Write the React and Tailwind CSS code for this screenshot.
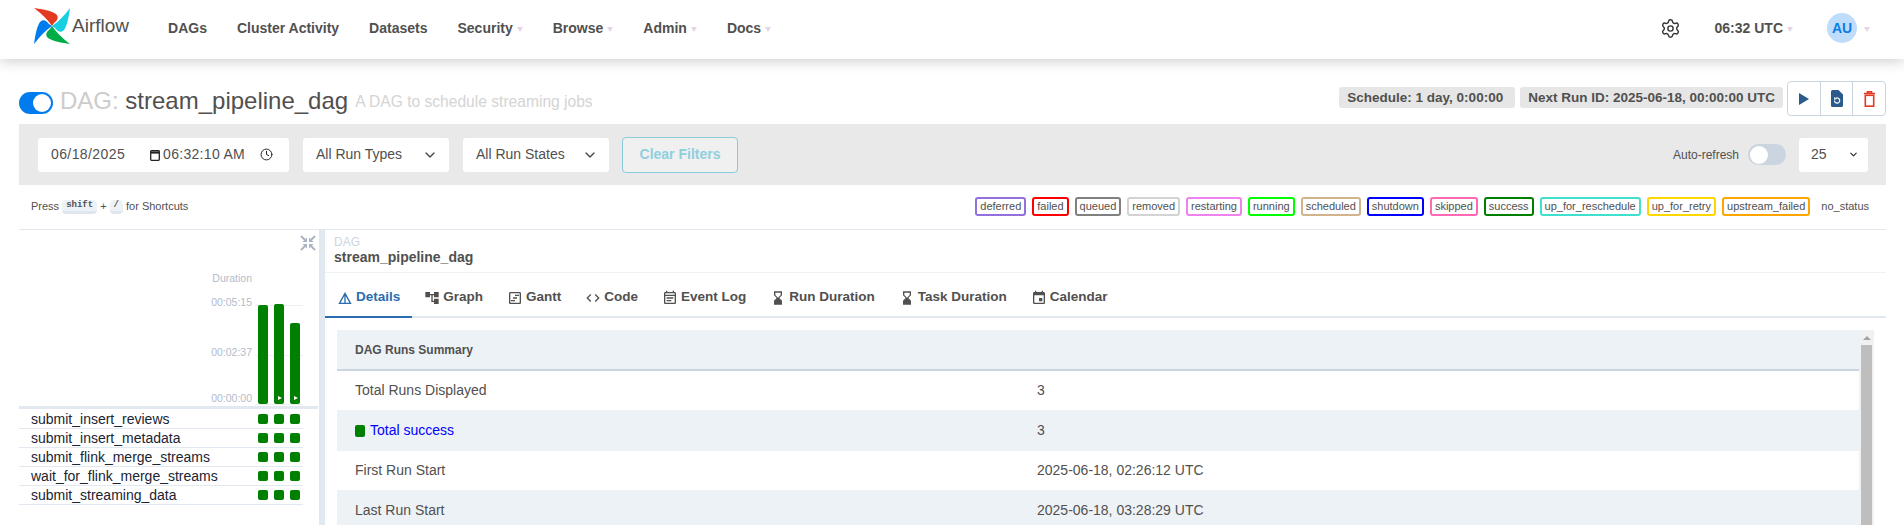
import React from "react";
import { ChevronDown, Settings, Clock } from "lucide-react";
import { MdDetails, MdAccountTree, MdOutlineViewTimeline, MdCode, MdOutlineEventNote, MdHourglassBottom, MdEvent } from "react-icons/md";

const Caret = ({ className }) => (
  <span className={"mt-[2px] inline-block h-0 w-0 border-x-[3.5px] border-t-[5px] border-x-transparent border-t-[#e4d5e6] " + (className || "ml-[4px]")} />
);

const blade = "M0 0C8 1 18 3 22 6C25 9 24 12 20 15L18 18C14 12 8 6 0 0Z";

const Logo = () => (
  <svg viewBox="0 0 36 36" className="h-[36px] w-[36px] shrink-0">
    <path d={blade} fill="#e43921" />
    <path d={blade} fill="#17cfe0" transform="rotate(90 18 18)" />
    <path d={blade} fill="#00ad46" transform="rotate(180 18 18)" />
    <path d={blade} fill="#017cee" transform="rotate(270 18 18)" />
  </svg>
);

const NavItem = ({ label, caret, className }) => (
  <span className={"flex items-center text-[14px] font-bold text-[#51504f] " + (className || "")}>
    {label}
    {caret && <Caret />}
  </span>
);

const Field = ({ children, className }) => (
  <div className={"flex h-[34px] items-center rounded-[3px] bg-white text-[14px] text-[#51504f] " + className}>{children}</div>
);

const legend = [
  ["deferred", "border-[#9370db]"],
  ["failed", "border-[#ff0000]"],
  ["queued", "border-[#808080]"],
  ["removed", "border-[#d3d3d3]"],
  ["restarting", "border-[#ee82ee]"],
  ["running", "border-[#00ff00]"],
  ["scheduled", "border-[#d2b48c]"],
  ["shutdown", "border-[#0000ff]"],
  ["skipped", "border-[#ff69b4]"],
  ["success", "border-[#008000]"],
  ["up_for_reschedule", "border-[#40e0d0]"],
  ["up_for_retry", "border-[#ffd700]"],
  ["upstream_failed", "border-[#ffa500]"],
];

const tasks = [
  "submit_insert_reviews",
  "submit_insert_metadata",
  "submit_flink_merge_streams",
  "wait_for_flink_merge_streams",
  "submit_streaming_data",
];

const Kbd = ({ children }) => (
  <kbd className="mx-[3px] rounded-[4px] border-b-[3px] border-[#dfe6ef] bg-[#edf2f7] px-[4px] font-['Liberation_Mono',monospace] text-[9px] font-bold leading-[11px] text-[#51504f]">
    {children}
  </kbd>
);

const tabs = [
  { label: "Graph", Icon: MdAccountTree },
  { label: "Gantt", Icon: MdOutlineViewTimeline },
  { label: "Code", Icon: MdCode },
  { label: "Event Log", Icon: MdOutlineEventNote },
  { label: "Run Duration", Icon: MdHourglassBottom },
  { label: "Task Duration", Icon: MdHourglassBottom },
  { label: "Calendar", Icon: MdEvent },
];

const rows = [
  ["Total Runs Displayed", "3", "h-[39px] bg-white"],
  ["Total success", "3", "h-[41px] bg-[#edf2f7]"],
  ["First Run Start", "2025-06-18, 02:26:12 UTC", "h-[39px] bg-white"],
  ["Last Run Start", "2025-06-18, 03:28:29 UTC", "h-[41px] bg-[#edf2f7]"],
];

const CollapseIcon = () => (
  <svg viewBox="0 0 16 16" className="absolute right-[3px] top-[5px] h-[16px] w-[16px]" fill="#a9b4c2" stroke="#a9b4c2">
    {[0, 90, 180, 270].map((r) => (
      <g key={r} transform={`rotate(${r} 8 8)`}>
        <path d="M1 1L5 5" strokeWidth="2" fill="none" />
        <path d="M7 2.500V7H2.500Z" strokeWidth="0" />
      </g>
    ))}
  </svg>
);

const Chart = () => (
  <svg viewBox="0 0 299 176" className="block h-[176px] w-[299px] font-['Liberation_Sans',Arial,sans-serif]">
    <text x="233" y="52" textAnchor="end" fontSize="10.500" fill="#b2bccb">Duration</text>
    <text x="233" y="76" textAnchor="end" fontSize="10.500" fill="#b2bccb">00:05:15</text>
    <text x="233" y="126" textAnchor="end" fontSize="10.500" fill="#b2bccb">00:02:37</text>
    <text x="233" y="172" textAnchor="end" fontSize="10.500" fill="#b2bccb">00:00:00</text>
    <path d="M236 75.500H284M236 125.500H284M236 174.500H284" stroke="#edf0f4" />
    <rect x="239" y="75" width="10" height="99" rx="2" fill="#008000" />
    <rect x="255" y="74" width="10" height="100" rx="2" fill="#008000" />
    <rect x="271" y="93" width="10" height="81" rx="2" fill="#008000" />
    <path d="M259 166l4 2-4 2zM275 166l4 2-4 2z" fill="#fff" />
  </svg>
);

export default function App() {
  return (
    <div className="h-[525px] w-[1904px] overflow-hidden bg-white font-['Liberation_Sans',Arial,sans-serif] text-[#51504f]">
      <header className="relative z-10 flex h-[59px] items-center bg-white pl-[34px] pr-[34px] shadow-[0_3px_12px_rgba(0,0,0,0.18)]">
        <div className="mb-[8px] flex items-center">
          <Logo />
          <span className="ml-[2px] text-[19px] leading-none text-[#51504f]">Airflow</span>
        </div>
        <nav className="mb-[3px] ml-[39px] flex items-center gap-[30px]">
          <NavItem label="DAGs" />
          <NavItem label="Cluster Activity" />
          <NavItem label="Datasets" />
          <NavItem label="Security" caret />
          <NavItem label="Browse" caret />
          <NavItem label="Admin" caret />
          <NavItem label="Docs" caret />
        </nav>
        <div className="mb-[3px] ml-auto flex items-center">
          <Settings size={21} strokeWidth={1.600} color="#333" />
          <NavItem label="06:32 UTC" caret className="ml-[34px]" />
          <div className="ml-[34px] flex h-[30px] w-[30px] items-center justify-center rounded-full bg-[#bfdcfb] text-[14px] font-bold text-[#0c7ce6]">AU</div>
          <Caret className="ml-[7px]" />
        </div>
      </header>

      <main className="flex flex-col pl-[19px] pr-[18px]">
        <div className="flex h-[65px] items-end pb-[9px]">
          <div className="mb-[1px] flex h-[22px] w-[34px] shrink-0 items-center justify-end rounded-full bg-[#017cee] pr-[2px]">
            <span className="h-[18px] w-[18px] rounded-full bg-white" />
          </div>
          <h2 className="mb-[1px] ml-[7px] text-[24px] leading-[27px] text-[#51504f]">
            <span className="text-[#cccccc]">DAG: </span>stream_pipeline_dag
          </h2>
          <span className="mb-[1px] ml-[7px] text-[15.600px] leading-[24px] text-[#d4d4d4]">A DAG to schedule streaming jobs</span>
          <div className="mb-[-1px] ml-auto flex items-center">
            <span className="mb-[2px] rounded-[3px] bg-[#e6e6e6] pl-[8px] pr-[12px] text-[13.500px] font-bold leading-[21px] text-[#51504f]">Schedule: 1 day, 0:00:00</span>
            <span className="mb-[2px] ml-[5px] rounded-[3px] bg-[#e6e6e6] px-[8px] text-[13.500px] font-bold leading-[21px] text-[#51504f]">Next Run ID: 2025-06-18, 00:00:00 UTC</span>
            <div className="ml-[4px] flex h-[35px] w-[99px] rounded-[4px] border border-[#cbd5e0] bg-white">
              <div className="flex flex-1 items-center justify-center border-r border-[#cbd5e0]">
                <svg viewBox="0 0 10 12" className="h-[12px] w-[10px]"><path d="M0 0L10 6L0 12Z" fill="#2a5b8c" /></svg>
              </div>
              <div className="flex flex-1 items-center justify-center border-r border-[#cbd5e0]">
                <svg viewBox="0 0 12 17" className="h-[17px] w-[12px]">
                  <path d="M1.500 0H7.500L12 4.500V15.500A1.500 1.500 0 0 1 10.500 17H1.500A1.500 1.500 0 0 1 0 15.500V1.500A1.500 1.500 0 0 1 1.500 0Z" fill="#2a5b8c" />
                  <path d="M3.500 10.500a2.600 2.600 0 1 0 1-2" fill="none" stroke="#fff" strokeWidth="1.200" />
                  <path d="M3 7v2.500H5.500z" fill="#fff" />
                </svg>
              </div>
              <div className="flex flex-1 items-center justify-center">
                <svg viewBox="0 0 11 16" className="h-[16px] w-[11px]" fill="none" stroke="#e43921" strokeWidth="1.600">
                  <path d="M0 2.500H11M3.500 2.500V.800H7.500V2.500" />
                  <rect x="1.300" y="4.300" width="8.400" height="10.900" />
                </svg>
              </div>
            </div>
          </div>
        </div>

        <div className="flex h-[61px] items-center bg-[#e9e9e9] pl-[19px] pr-[18px]">
          <Field className="w-[251px] pl-[13px] pr-[16px]">
            <span className="tracking-[0.4px]">06/18/2025</span>
            <svg viewBox="0 0 10 12" className="ml-[25px] h-[12px] w-[10px]" fill="none" stroke="#222" strokeWidth="1.300">
              <rect x="0.700" y="1.700" width="8.600" height="9.600" rx="0.800" />
              <path d="M0.700 3.500H9.300" strokeWidth="2.200" />
            </svg>
            <span className="ml-[3px] tracking-[0.3px]">06:32:10 AM</span>
            <Clock size={13} strokeWidth={1.800} color="#222" className="ml-auto" />
          </Field>
          <Field className="ml-[14px] w-[146px] justify-between pl-[13px] pr-[11px]">All Run Types<ChevronDown size={16} strokeWidth={2} color="#444" /></Field>
          <Field className="ml-[14px] w-[146px] justify-between pl-[13px] pr-[11px]">All Run States<ChevronDown size={16} strokeWidth={2} color="#444" /></Field>
          <button className="ml-[13px] h-[36px] w-[116px] rounded-[4px] border border-[#8bcbdb] bg-[#f0f0f0] text-[14px] font-bold text-[#8fcfde]">Clear Filters</button>
          <span className="ml-auto text-[12px] text-[#51504f]">Auto-refresh</span>
          <div className="ml-[9px] flex h-[21px] w-[38px] items-center rounded-full bg-[#cbd5e0] pl-[2px]">
            <span className="h-[18px] w-[18px] rounded-full bg-white" />
          </div>
          <Field className="ml-[13px] w-[69px] justify-between pl-[12px] pr-[9px]">25<ChevronDown size={11} strokeWidth={2.200} color="#222" /></Field>
        </div>

        <div className="flex h-[45px] items-center justify-between border-b border-[#e5e7f0] pb-[1px] pl-[12px] pr-[17px]">
          <div className="flex items-center text-[11px] text-[#51504f]">
            Press <Kbd>shift</Kbd> + <Kbd>/</Kbd> for Shortcuts
          </div>
          <div className="flex items-center gap-[6px] text-[11px] text-[#51504f]">
            {legend.map(([name, cls]) => (
              <span key={name} className={"rounded-[3px] border-2 bg-white px-[3px] leading-[15px] " + cls}>{name}</span>
            ))}
            <span className="ml-[5px] leading-[15px]">no_status</span>
          </div>
        </div>

        <div className="flex h-[295px]">
          <aside className="relative w-[300px] shrink-0">
            <CollapseIcon />
            <div className="mb-[1px] w-[299px] border-b-[3px] border-[#e2e8f0]">
              <Chart />
            </div>
            {tasks.map((t) => (
              <div key={t} className="flex h-[19px] w-[284px] items-center border-b border-[#e2e8f0] pl-[12px] text-[14px] text-[#1a2433]">
                <span className="w-[227px] truncate">{t}</span>
                <span className="flex gap-[6px]">
                  <i className="h-[10px] w-[10px] rounded-[2px] bg-[#008000]" />
                  <i className="h-[10px] w-[10px] rounded-[2px] bg-[#008000]" />
                  <i className="h-[10px] w-[10px] rounded-[2px] bg-[#008000]" />
                </span>
              </div>
            ))}
          </aside>
          <div className="w-[6px] shrink-0 bg-[#e2e8f0]" />
          <section className="min-w-0 flex-1">
            <div className="flex h-[43px] flex-col justify-center border-b border-[#edf2f7] pb-[2px] pl-[9px]">
              <div className="text-[12px] leading-[14px] text-[#ced5df]">DAG</div>
              <div className="text-[14px] font-bold leading-[16px] text-[#51504f]">stream_pipeline_dag</div>
            </div>
            <div className="flex h-[45px] items-stretch border-b-2 border-[#e2e8f0]">
              <div className="mb-[-2px] flex items-center gap-[3px] border-b-2 border-[#2b6cb0] px-[12px] pt-[6px] text-[13.500px] font-bold text-[#2b6cb0]">
                <MdDetails size={16} />Details
              </div>
              {tabs.map(({ label, Icon }) => (
                <div key={label} className="flex items-center gap-[3px] px-[12px] pt-[6px] text-[13.500px] font-bold text-[#51504f]">
                  <Icon size={16} />{label}
                </div>
              ))}
            </div>
            <div className="ml-[12px] mt-[12px] flex w-[1537px]">
              <div className="min-w-0 flex-1">
                <div className="flex h-[41px] items-center border-b-2 border-[#cbd5e0] bg-[#edf2f7] pl-[18px] text-[12px] font-bold text-[#51504f]">DAG Runs Summary</div>
                {rows.map(([a, b, cls], i) => (
                  <div key={a} className={"flex items-center text-[14px] text-[#51504f] " + cls}>
                    <div className="flex w-[700px] items-center pl-[18px]">
                      {i === 1 && <i className="mr-[5px] h-[12px] w-[10px] rounded-[2px] bg-[#008000]" />}
                      <span className={i === 1 ? "text-[#0000ff]" : ""}>{a}</span>
                    </div>
                    <div>{b}</div>
                  </div>
                ))}
              </div>
              <div className="flex w-[15px] shrink-0 flex-col items-center bg-[#f1f1f1] px-[2px]">
                <span className="mt-[6px] h-0 w-0 border-x-[4px] border-b-[4px] border-x-transparent border-b-[#a3a3a3]" />
                <div className="mt-[5px] h-[200px] w-full bg-[#bebebe]" />
              </div>
            </div>
          </section>
        </div>
      </main>
    </div>
  );
}
